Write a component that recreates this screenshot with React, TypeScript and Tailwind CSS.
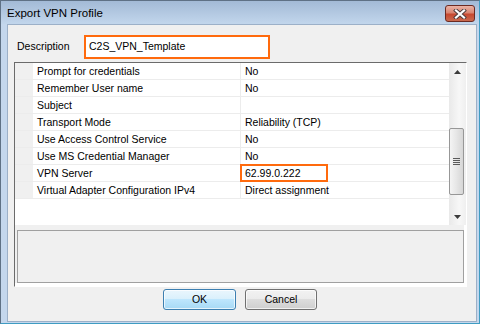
import React from "react";

const rows: [string, string][] = [
  ["Prompt for credentials", "No"],
  ["Remember User name", "No"],
  ["Subject", ""],
  ["Transport Mode", "Reliability (TCP)"],
  ["Use Access Control Service", "No"],
  ["Use MS Credential Manager", "No"],
  ["VPN Server", "62.99.0.222"],
  ["Virtual Adapter Configuration IPv4", "Direct assignment"],
];

function CloseButton() {
  return (
    <div className="mt-[4px] mr-[4px] grid h-[17px] w-[30px] place-items-center rounded-[3px] border border-[#6b2a22] bg-[linear-gradient(to_bottom,#eab3a6_0%,#d98571_45%,#c7482f_55%,#c96a4f_100%)]">
      <svg width="14" height="10" viewBox="0 0 14 10">
        <path d="M3 1.5 L11 8.5 M11 1.5 L3 8.5" stroke="#4a3a3a" strokeWidth="4" strokeLinecap="square" />
        <path d="M3 1.5 L11 8.5 M11 1.5 L3 8.5" stroke="#ffffff" strokeWidth="2.2" strokeLinecap="square" />
      </svg>
    </div>
  );
}

function ScrollBar() {
  return (
    <div className="flex w-[17px] flex-col bg-[linear-gradient(to_right,#e9e9e9,#f7f7f7_60%,#efefef)]">
      <div className="grid h-[17px] place-items-center">
        <svg width="7" height="4" viewBox="0 0 7 4">
          <polygon points="3.5,0 7,4 0,4" fill="#3c3c3c" />
        </svg>
      </div>
      <div className="h-[48px]" />
      <div className="flex h-[67px] w-[15px] items-center justify-center rounded-[2px] border border-[#979797] bg-[linear-gradient(to_right,#f4f4f4,#e6e6e6_50%,#d6d6d6)]">
        <div className="flex flex-col gap-[1px]">
          <div className="h-[1px] w-[7px] bg-[#5a5a5a]" />
          <div className="h-[1px] w-[7px] bg-[#5a5a5a]" />
          <div className="h-[1px] w-[7px] bg-[#5a5a5a]" />
          <div className="h-[1px] w-[7px] bg-[#5a5a5a]" />
        </div>
      </div>
      <div className="flex-1" />
      <div className="grid h-[17px] place-items-center">
        <svg width="7" height="4" viewBox="0 0 7 4">
          <polygon points="0,0 7,0 3.5,4" fill="#3c3c3c" />
        </svg>
      </div>
    </div>
  );
}

export default function App() {
  return (
    <div className="flex h-[324px] w-[480px] flex-col border border-[#5f7185] border-r-[#3f9cc2] border-b-[#3f9cc2] bg-[#c4d7ed] font-['Liberation_Sans',Arial,sans-serif] text-black">
      {/* title bar */}
      <div className="flex h-[23px] items-start justify-between bg-[linear-gradient(to_bottom,#a3bad6,#c2d6ec)]">
        <span className="pl-[6px] pt-[5px] text-[11.5px] leading-[14px]">Export VPN Profile</span>
        <CloseButton />
      </div>

      {/* client area */}
      <div className="ml-[6px] mr-[2px] mb-[1px] flex flex-1 flex-col border border-[#9cb0c8] bg-[#f0f0f0]">
        <div className="mt-[10px] flex items-center text-[10.5px]">
          <span className="w-[76px] pl-[9px]">Description</span>
          <div className="flex h-[24px] w-[186px] items-center border-2 border-[#ff6a0d] bg-white pl-[3px]">
            C2S_VPN_Template
          </div>
        </div>

        <div className="ml-[6px] mt-[3px] flex h-[225px] w-[453px] flex-col border border-[#6b6b6b] border-r-white border-b-white bg-white text-[10.5px]">
          <div className="flex h-[162px]">
            <div className="flex-1">
              {rows.map(([name, value]) => (
                <div key={name} className="flex h-[17px] border-b border-[#ececec]">
                  <div className="w-[18px] bg-[#f0f0f0]" />
                  <div className="flex w-[208px] items-center border-r border-[#ececec] pl-[4px] leading-none">{name}</div>
                  <div className="relative flex flex-1 items-center pl-[4px] leading-none">
                    {value}
                    {name === "VPN Server" && (
                      <div className="absolute left-[-1px] top-[-1px] h-[18px] w-[88px] border-2 border-[#ff6a0d]" />
                    )}
                  </div>
                </div>
              ))}
            </div>
            <ScrollBar />
          </div>
          <div className="flex h-[61px] flex-col bg-white">
            <div className="mr-[2px] mb-[3px] flex-1 bg-[#f0f0f0] pl-[2px] pt-[5px]">
              <div className="h-full border border-[#a0a0a0] bg-[#f0f0f0]" />
            </div>
          </div>
        </div>

        <div className="ml-[155px] mt-[2px] flex gap-[9px] text-[10.5px]">
          <button className="h-[21px] w-[73px] rounded-[3px] border border-[#3c7fb1] bg-[linear-gradient(to_bottom,#eaf6fd_0%,#d9f0fc_50%,#bee6fd_50%,#a7d9f5_100%)] shadow-[inset_0_0_0_1px_rgba(255,255,255,0.7)]">
            OK
          </button>
          <button className="h-[21px] w-[72px] rounded-[3px] border border-[#707070] bg-[linear-gradient(to_bottom,#f2f2f2_0%,#ebebeb_50%,#dddddd_50%,#cfcfcf_100%)] shadow-[inset_0_0_0_1px_rgba(255,255,255,0.7)]">
            Cancel
          </button>
        </div>
      </div>
    </div>
  );
}
